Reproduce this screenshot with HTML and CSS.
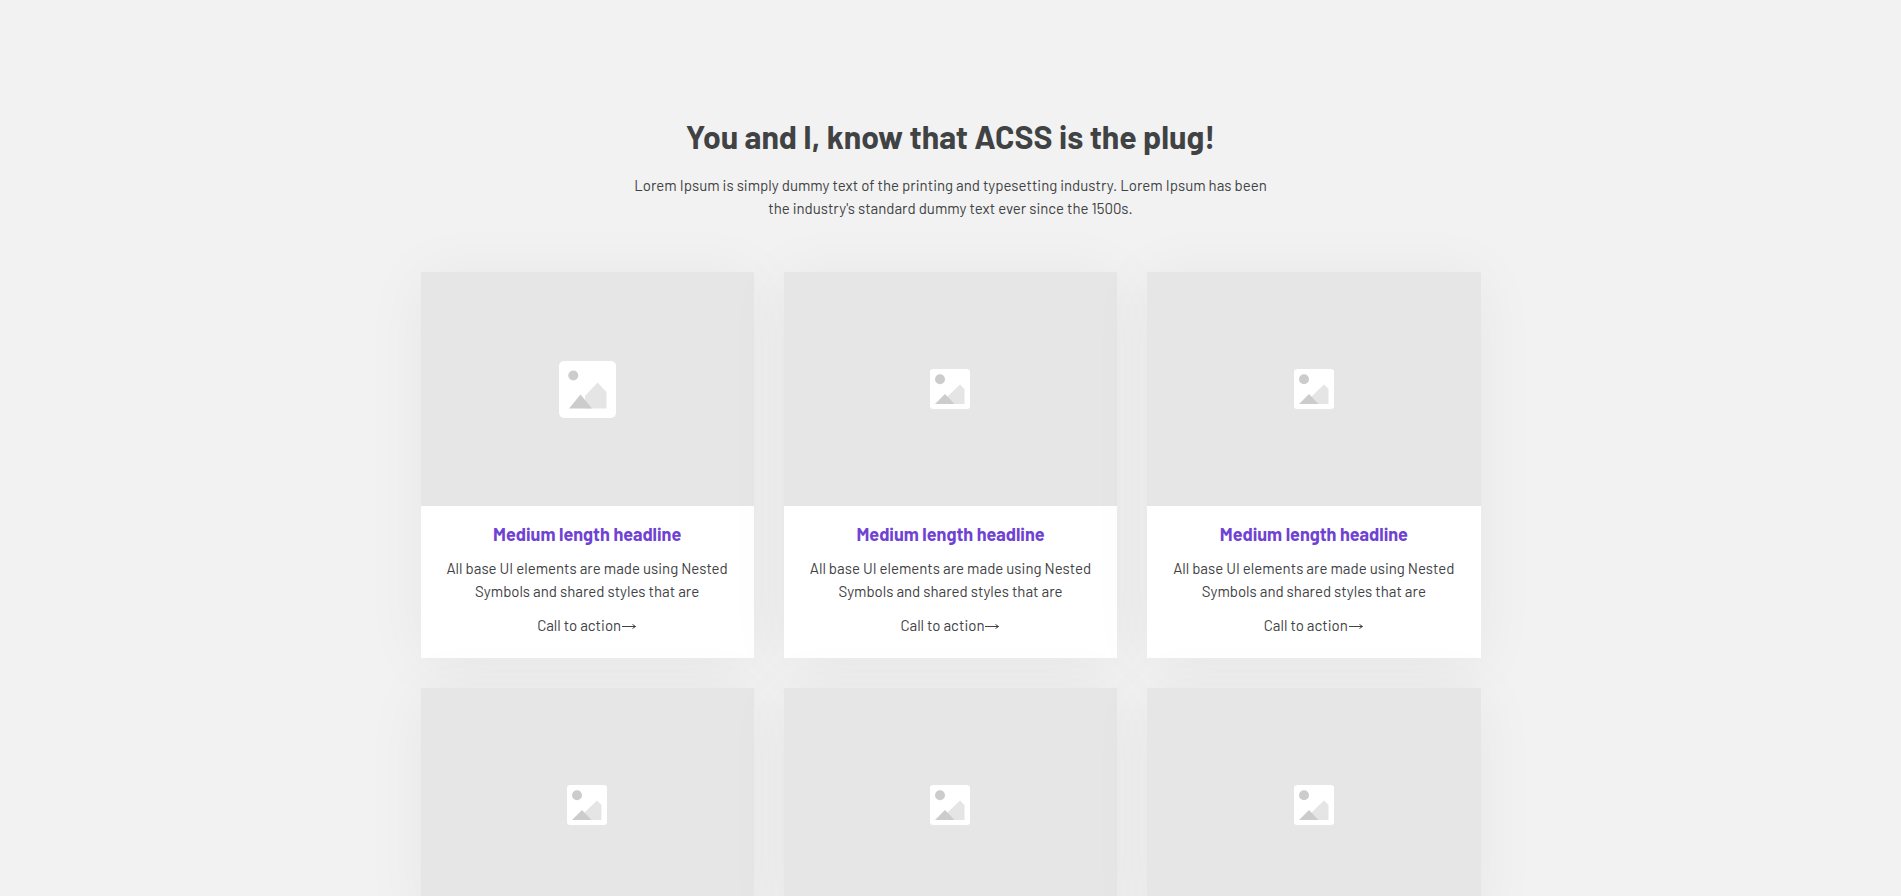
FILE: index.html
```
<!DOCTYPE html>
<html lang="en">
<head>
    <meta charset="UTF-8">
    <meta name="viewport" content="width=device-width, initial-scale=1.0">
    <title>Cards</title>
    <link rel="stylesheet" href="styles.css">
</head>
<body>
    <svg class="sprite" aria-hidden="true">
        <symbol id="picture-lg" viewBox="0 0 57 57">
            <rect width="57" height="57" rx="5" fill="#fff"/>
            <circle cx="14.3" cy="14.5" r="5" fill="#ccc"/>
            <path d="M26 35L38.5 21.5L47.5 31V47.5H26z" fill="#e5e5e5"/>
            <path d="M10 47.5L21.5 33.5L33 47.5z" fill="#ccc"/>
        </symbol>
        <symbol id="picture" viewBox="0 0 40 40">
            <rect width="40" height="40" rx="3" fill="#fff"/>
            <circle cx="10" cy="10.3" r="5" fill="#ccc"/>
            <path d="M17 28L30 15.5L34.5 20V35H17z" fill="#e5e5e5"/>
            <path d="M5 35L15 25L24.5 35z" fill="#ccc"/>
        </symbol>
    </svg>
    <section class="section">
        <div class="intro">
            <h2 class="intro-title">You and I, know that ACSS is the plug!</h2>
            <p class="text">Lorem Ipsum is simply dummy text of the printing and typesetting industry. Lorem Ipsum has been <br>the industry's standard dummy text ever since the 1500s.</p>
        </div>
        <div class="grid">
            <div class="card">
                <div class="card-image"><svg class="icon icon-lg"><use href="#picture-lg"/></svg></div>
                <div class="card-body">
                    <h3 class="card-title">Medium length headline</h3>
                    <p class="text">All base UI elements are made using Nested <br>Symbols and shared styles that are</p>
                    <a class="text card-link" href="#">Call to action<svg class="arrow" viewBox="0 0 16 10"><path d="M1 5.5H14.5M11.5 3.5L14.5 5.5L11.5 7.5"/></svg></a>
                </div>
            </div>
            <div class="card">
                <div class="card-image"><svg class="icon"><use href="#picture"/></svg></div>
                <div class="card-body">
                    <h3 class="card-title">Medium length headline</h3>
                    <p class="text">All base UI elements are made using Nested <br>Symbols and shared styles that are</p>
                    <a class="text card-link" href="#">Call to action<svg class="arrow" viewBox="0 0 16 10"><path d="M1 5.5H14.5M11.5 3.5L14.5 5.5L11.5 7.5"/></svg></a>
                </div>
            </div>
            <div class="card">
                <div class="card-image"><svg class="icon"><use href="#picture"/></svg></div>
                <div class="card-body">
                    <h3 class="card-title">Medium length headline</h3>
                    <p class="text">All base UI elements are made using Nested <br>Symbols and shared styles that are</p>
                    <a class="text card-link" href="#">Call to action<svg class="arrow" viewBox="0 0 16 10"><path d="M1 5.5H14.5M11.5 3.5L14.5 5.5L11.5 7.5"/></svg></a>
                </div>
            </div>
            <div class="card">
                <div class="card-image"><svg class="icon"><use href="#picture"/></svg></div>
            </div>
            <div class="card">
                <div class="card-image"><svg class="icon"><use href="#picture"/></svg></div>
            </div>
            <div class="card">
                <div class="card-image"><svg class="icon"><use href="#picture"/></svg></div>
            </div>
        </div>
    </section>
</body>
</html>
```
FILE: styles.css
```
*{
    box-sizing: border-box;
    margin: 0;
    padding: 0;
}
body{
    background: #f2f2f2;
    color: #404244;
    font-family: Barlow, Roboto, "Liberation Sans", sans-serif;
}
.sprite{
    display: none;
}
.section{
    max-width: 1100px;
    margin: 0 auto;
    padding: 116px 20px;
}
.intro{
    text-align: center;
    margin-bottom: 52px;
}
.intro-title{
    font-size: 32px;
    line-height: 40px;
    font-weight: 700;
    margin-bottom: 18px;
}
.text{
    font-size: 15px;
    line-height: 23px;
    font-weight: 400;
}
.grid{
    display: grid;
    grid-template-columns: repeat(3, 1fr);
    gap: 30px;
}
.card{
    background: #fff;
    text-align: center;
    box-shadow: 0 4px 60px rgba(0,0,0,0.05);
}
.card-image{
    height: 234px;
    background: #e6e6e6;
    display: flex;
    align-items: center;
    justify-content: center;
}
.icon{
    width: 40px;
    height: 40px;
}
.icon-lg{
    width: 57px;
    height: 57px;
}
.card-body{
    display: flex;
    flex-direction: column;
    align-items: center;
    gap: 11px;
    padding: 16px 12px 21px;
}
.card-title{
    font-size: 18px;
    line-height: 24px;
    font-weight: 700;
    color: #6f42d3;
}
.card-link{
    display: flex;
    align-items: center;
    color: inherit;
    text-decoration: none;
}
.arrow{
    width: 16px;
    height: 10px;
    fill: none;
    stroke: #404244;
}
```
